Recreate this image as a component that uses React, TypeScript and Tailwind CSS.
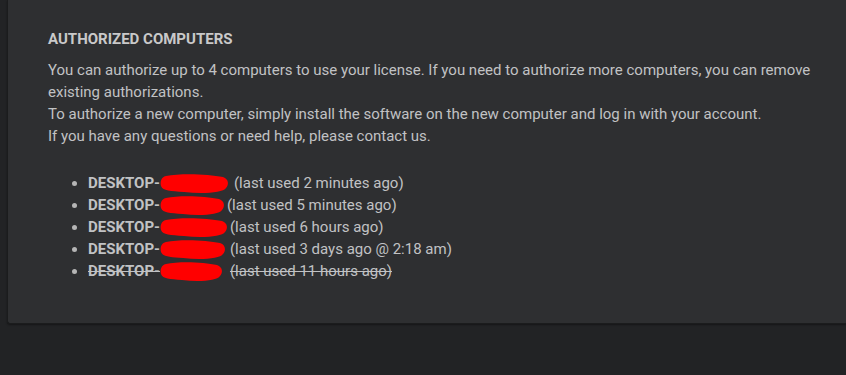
import React from 'react';

interface Computer {
  label: string;
  blob: number;
  gap: number;
  revoked?: boolean;
}

const computers: Computer[] = [
  { label: '(last used 2 minutes ago)', blob: 69, gap: 5 },
  { label: '(last used 5 minutes ago)', blob: 65, gap: 2 },
  { label: '(last used 6 hours ago)', blob: 68, gap: 2 },
  { label: '(last used 3 days ago @ 2:18 am)', blob: 66, gap: 4 },
  { label: '(last used 11 hours ago)', blob: 63, gap: 7, revoked: true },
];

// red marker scribble hiding the machine name
function Redaction({ width }: { width: number }) {
  const w = width;
  return (
    <svg width={w} height={22} viewBox={`0 0 ${w} 22`} className="inline-block align-middle -my-3">
      <path
        d={`M6 3 C ${w * 0.3} 0, ${w * 0.7} 1, ${w - 6} 4 C ${w} 6, ${w} 12, ${w - 3} 15 C ${w - 6} 20, ${w * 0.6} 21, ${w * 0.35} 19 C ${w * 0.15} 18, 3 18, 1 13 C 0 9, 1 4, 6 3 Z`}
        fill="#ff0000"
      />
    </svg>
  );
}

export default function App() {
  return (
    <div className="w-[846px] h-[375px] bg-[#222325] pl-[7px] overflow-hidden font-['Roboto',sans-serif]">
      <div className="h-[324px] bg-[#2e2f31] border-l border-b border-[#1b1c1d] rounded-bl-[3px] shadow-[0_1px_2px_rgba(0,0,0,0.4)] pl-10 pr-6 pt-[28px]">
        <h2 className="text-[15px] font-bold text-[#c9c9c9] leading-[22px] uppercase">Authorized Computers</h2>
        <div className="mt-[9px] text-[15px] leading-[22px] text-[#c1c2c4]">
          <p>
            You can authorize up to 4 computers to use your license. If you need to authorize more computers, you can remove existing authorizations.
          </p>
          <p>To authorize a new computer, simply install the software on the new computer and log in with your account.</p>
          <p>If you have any questions or need help, please contact us.</p>
        </div>

        <ul className="mt-[25px] pl-[40px] list-disc text-[15px] leading-[22px] text-[#c1c2c4] marker:text-[#b5b5b5]">
          {computers.map((c, i) => (
            <li key={i} className={c.revoked ? 'line-through decoration-[#c1c2c4]' : ''}>
              <span className="font-bold">DESKTOP-</span>
              <Redaction width={c.blob} />
              <span style={{ marginLeft: c.gap }}>{c.label}</span>
            </li>
          ))}
        </ul>
      </div>
    </div>
  );
}
